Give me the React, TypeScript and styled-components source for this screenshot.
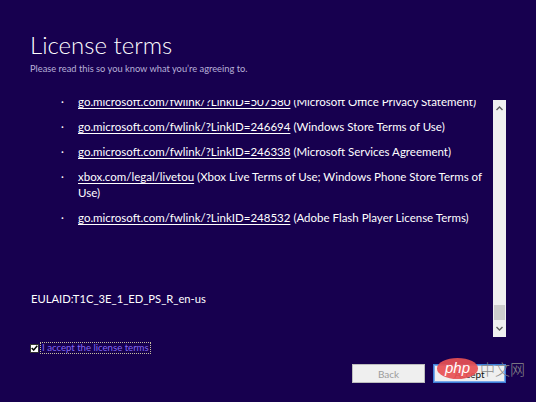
import React from "react";
import styled, { createGlobalStyle } from "styled-components";

const Global = createGlobalStyle`
  html, body { margin: 0; padding: 0; background: #17004f; }
  body { width: 536px; height: 402px; overflow: hidden; font-family: Lato, "Open Sans", sans-serif; }
`;

const Page = styled.div`
  width: 536px;
  height: 402px;
  box-sizing: border-box;
  padding: 29px 30px 0 30px;
  display: flex;
  flex-direction: column;
  color: #ffffff;
  position: relative;
`;

const Title = styled.h1`
  margin: 0;
  font-family: Lato, sans-serif;
  font-weight: 300;
  font-size: 24px;
  line-height: 32px;
  color: #ffffff;
`;

const Subtitle = styled.p`
  margin: 2px 0 0 0;
  font-size: 9.3px;
  line-height: 12px;
  color: #b8b0d8;
`;

const ContentRow = styled.div`
  margin-top: 25px;
  height: 237px;
  display: flex;
`;

const Viewport = styled.div`
  flex: 1;
  overflow: hidden;
  display: flex;
  flex-direction: column;
  justify-content: flex-end;
  padding-bottom: 31px;
`;

const List = styled.ul`
  list-style: none;
  margin: 0;
  padding: 0 0 0 31px;
  display: flex;
  flex-direction: column;
  gap: 9px;
`;

const Item = styled.li`
  display: flex;
  font-size: 11.5px;
  line-height: 16px;
  color: #ffffff;
  white-space: nowrap;
`;

const Bullet = styled.span`
  width: 17px;
  flex: none;
  font-size: 11px;
`;

const Link = styled.span`
  text-decoration: underline;
  text-underline-offset: 2px;
`;

const Eula = styled.div`
  margin-top: 66px;
  padding-left: 1px;
  font-size: 11.2px;
  line-height: 14px;
`;

const Scrollbar = styled.div`
  width: 13px;
  flex: none;
  background: #f0f0f0;
  display: flex;
  flex-direction: column;
  align-items: center;
`;

const Arrow = styled.svg`
  width: 7px;
  height: 5px;
  margin: 6px 0;
  flex: none;
`;

const Track = styled.div`
  flex: 1;
  width: 100%;
  display: flex;
  flex-direction: column;
  justify-content: flex-end;
`;

const Thumb = styled.div`
  height: 15px;
  margin: 0 1px;
  background: #cdcdcd;
`;

const AcceptRow = styled.label`
  margin-top: 5px;
  display: flex;
  align-items: center;
  gap: 1px;
  height: 12px;
`;

const Box = styled.span`
  width: 7px;
  height: 7px;
  background: #ffffff;
  border: 1px solid #333;
  display: flex;
  align-items: center;
  justify-content: center;
`;

const LabelText = styled.span`
  font-size: 9.6px;
  line-height: 10px;
  color: #8466f2;
  padding: 0 1px;
  border: 1px dotted #c8c0a0;
`;

const Buttons = styled.div`
  margin-top: 10px;
  display: flex;
  justify-content: flex-end;
  gap: 8px;
`;

const Button = styled.button<{ $primary?: boolean }>`
  width: 73px;
  height: 19px;
  box-sizing: border-box;
  padding: 0;
  font-family: Lato, sans-serif;
  font-size: 10px;
  background: #efefef;
  color: ${(p) => (p.$primary ? "#111" : "#9c9c9c")};
  border: 1px solid ${(p) => (p.$primary ? "#3c7fd8" : "#bdbdbd")};
  box-shadow: ${(p) => (p.$primary ? "inset 0 0 0 1px #7aa8e8" : "none")};
`;

const Watermark = styled.div`
  position: absolute;
  left: 437px;
  top: 358px;
  display: flex;
  align-items: center;
  pointer-events: none;
`;

const PhpBadge = styled.div`
  width: 41px;
  height: 21px;
  border-radius: 50%;
  background: rgba(232, 80, 84, 0.92);
  color: #fff;
  font-family: "Liberation Sans", sans-serif;
  font-style: italic;
  font-size: 15px;
  line-height: 20px;
  text-align: center;
`;

const Cn = styled.span`
  margin-left: 2px;
  font-family: "Noto Sans CJK SC", sans-serif;
  font-size: 15px;
  font-weight: 300;
  color: #8a8a8a;
`;

const items: { link: string; rest: React.ReactNode }[] = [
  { link: "go.microsoft.com/fwlink/?LinkID=507580", rest: " (Microsoft Office Privacy Statement)" },
  { link: "go.microsoft.com/fwlink/?LinkID=246694", rest: " (Windows Store Terms of Use)" },
  { link: "go.microsoft.com/fwlink/?LinkID=246338", rest: " (Microsoft Services Agreement)" },
  {
    link: "xbox.com/legal/livetou",
    rest: (
      <>
        {" (Xbox Live Terms of Use; Windows Phone Store Terms of"}
        <br />
        {"Use)"}
      </>
    ),
  },
  { link: "go.microsoft.com/fwlink/?LinkID=248532", rest: " (Adobe Flash Player License Terms)" },
];

export default function App() {
  return (
    <>
      <Global />
      <Page>
        <Title>License terms</Title>
        <Subtitle>Please read this so you know what you’re agreeing to.</Subtitle>
        <ContentRow>
          <Viewport>
            <List>
              {items.map((it, i) => (
                <Item key={i}>
                  <Bullet>·</Bullet>
                  <span>
                    <Link>{it.link}</Link>
                    {it.rest}
                  </span>
                </Item>
              ))}
            </List>
            <Eula>EULAID:T1C_3E_1_ED_PS_R_en-us</Eula>
          </Viewport>
          <Scrollbar>
            <Arrow viewBox="0 0 7 5">
              <path d="M0.5 4 L3.5 1 L6.5 4" fill="none" stroke="#606060" strokeWidth="1.4" />
            </Arrow>
            <Track>
              <Thumb />
            </Track>
            <Arrow viewBox="0 0 7 5">
              <path d="M0.5 1 L3.5 4 L6.5 1" fill="none" stroke="#606060" strokeWidth="1.4" />
            </Arrow>
          </Scrollbar>
        </ContentRow>
        <AcceptRow>
          <Box>
            <svg width="7" height="6" viewBox="0 0 7 6">
              <path d="M0.7 3 L2.7 5 L6.3 0.8" fill="none" stroke="#000" strokeWidth="1.5" />
            </svg>
          </Box>
          <LabelText>I accept the license terms</LabelText>
        </AcceptRow>
        <Buttons>
          <Button>Back</Button>
          <Button $primary>Accept</Button>
        </Buttons>
        <Watermark>
          <PhpBadge>php</PhpBadge>
          <Cn>中文网</Cn>
        </Watermark>
      </Page>
    </>
  );
}
